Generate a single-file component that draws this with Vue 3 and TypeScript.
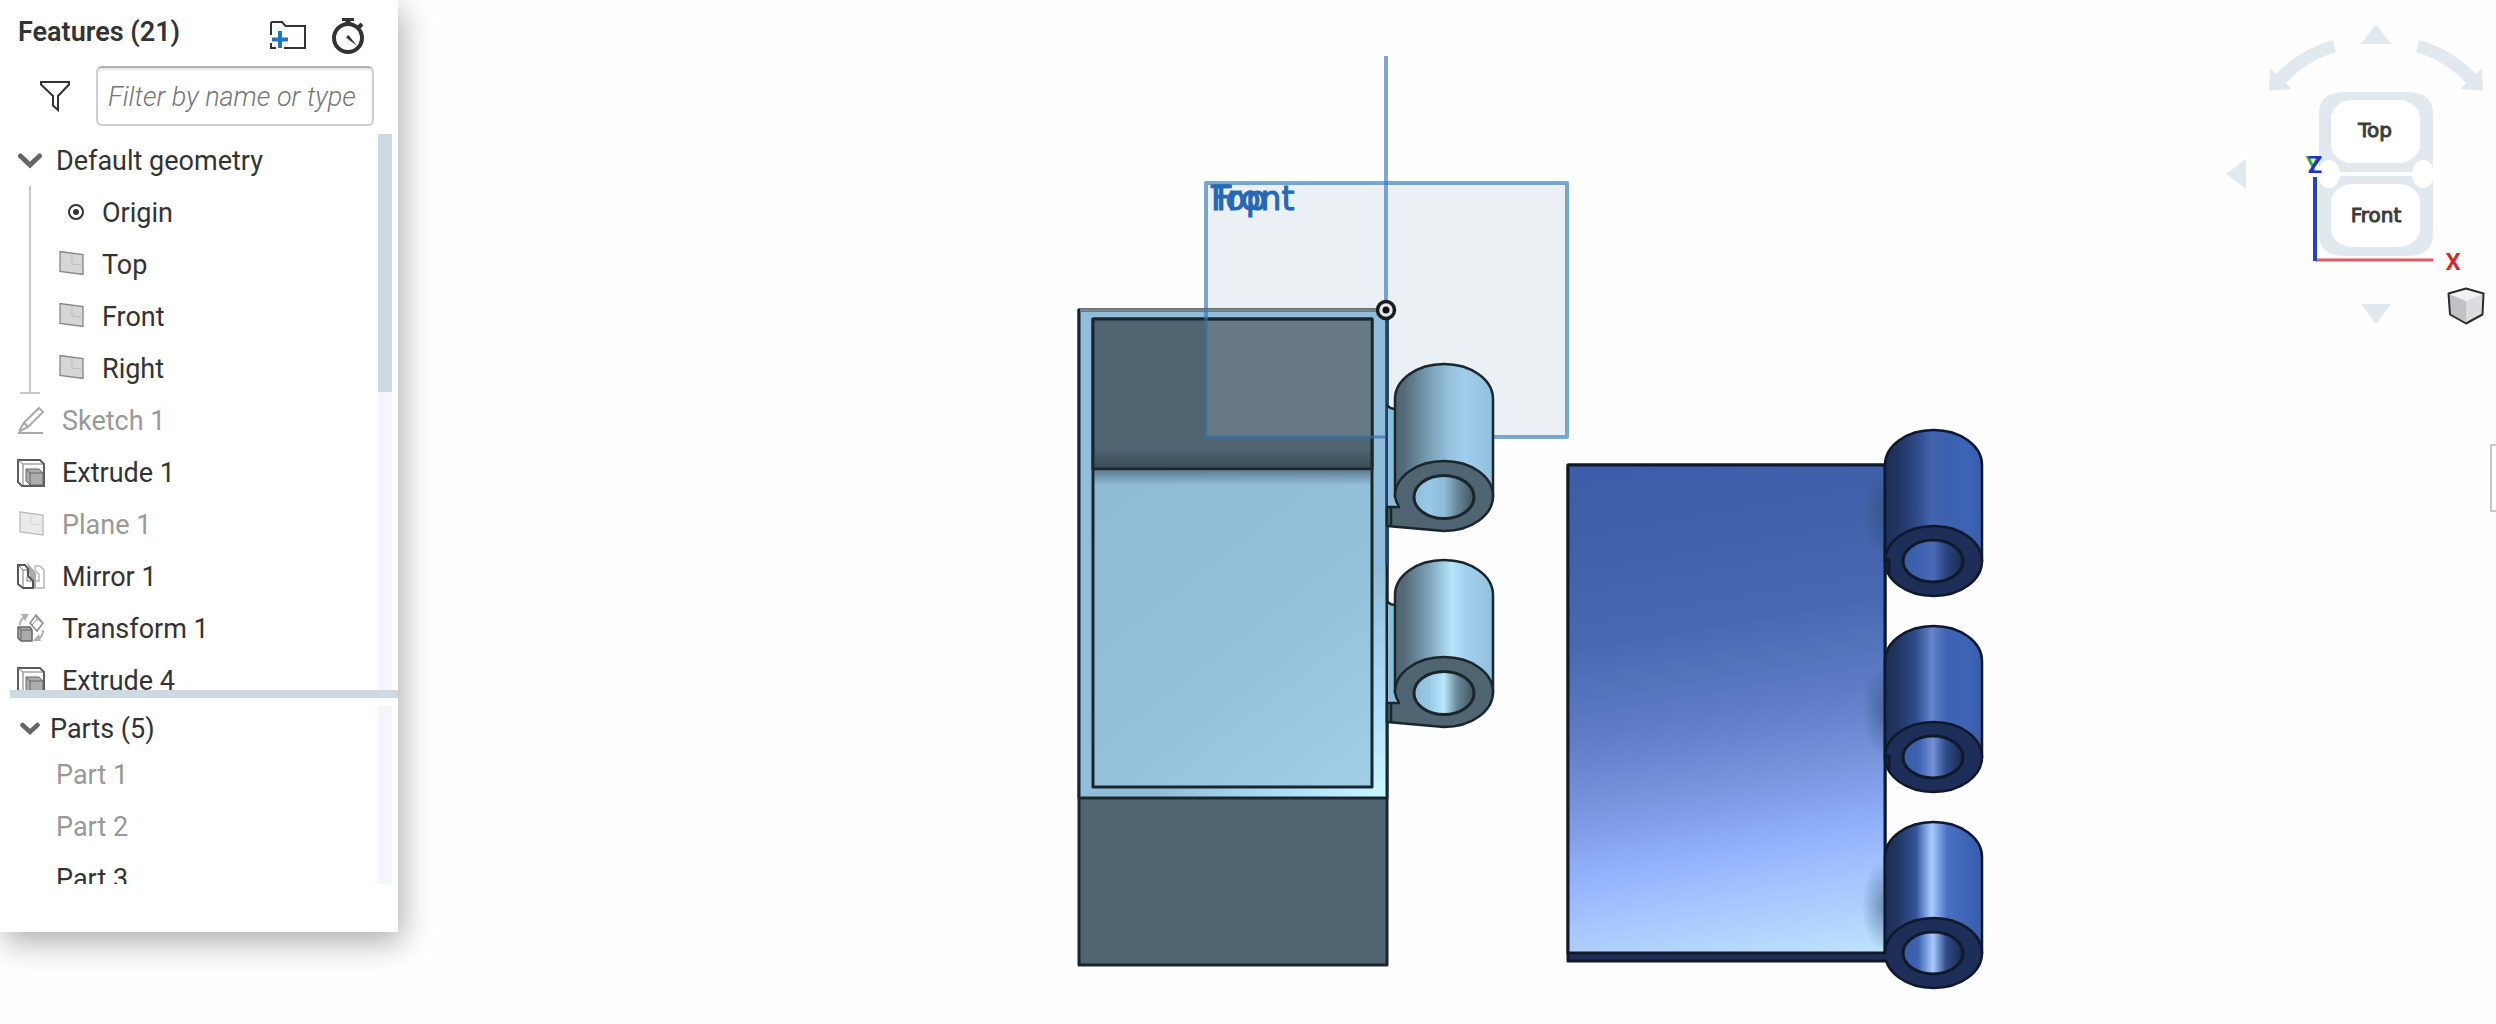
<script setup lang="ts">
import { ref } from 'vue'

type Icon = 'origin' | 'plane' | 'sketch' | 'extrude' | 'mirror' | 'transform'
interface Item {
  name: string
  icon: Icon
  muted?: boolean
}

const filter = ref('')

const geometry: Item[] = [
  { name: 'Origin', icon: 'origin' },
  { name: 'Top', icon: 'plane' },
  { name: 'Front', icon: 'plane' },
  { name: 'Right', icon: 'plane' },
]

const features: Item[] = [
  { name: 'Sketch 1', icon: 'sketch', muted: true },
  { name: 'Extrude 1', icon: 'extrude' },
  { name: 'Plane 1', icon: 'plane', muted: true },
  { name: 'Mirror 1', icon: 'mirror' },
  { name: 'Transform 1', icon: 'transform' },
  { name: 'Extrude 4', icon: 'extrude' },
]

const parts = [
  { name: 'Part 1', muted: true },
  { name: 'Part 2', muted: true },
  { name: 'Part 3', muted: false },
]

const lightTubes = [
  { y: 0, fill: 'url(#lt0)', bore: 'url(#lb0)' },
  { y: 196, fill: 'url(#lt1)', bore: 'url(#lb1)' },
]

const blueTubes = [
  { y: 0, fill: 'url(#bt0)', bore: 'url(#bb0)' },
  { y: 196, fill: 'url(#bt1)', bore: 'url(#bb1)' },
  { y: 392, fill: 'url(#bt2)', bore: 'url(#bb2)' },
]

const tubeStops = [
  { id: 'bt0', c: ['#1c2e54', '#20345f', '#2d4886', '#4364ac', '#3c61b0', '#3d64b6', '#3a5ca6'] },
  { id: 'bt1', c: ['#1c2e54', '#20345f', '#2f4c8c', '#6485cc', '#3f63b3', '#3d64b6', '#3a5ca6'] },
  { id: 'bt2', c: ['#1c2e54', '#20345f', '#34539a', '#a9ccff', '#4a70c4', '#3d64b6', '#3a5ca6'] },
]
const tubeOffsets = [0, 0.12, 0.32, 0.48, 0.64, 0.85, 1]

const boreStops = [
  { id: 'bb0', c: ['#3a5ca6', '#3d62b0', '#4a6bb6', '#2b447d', '#1a2a4d'] },
  { id: 'bb1', c: ['#3a5ca6', '#3d62b0', '#7390d6', '#2f4a88', '#1a2a4d'] },
  { id: 'bb2', c: ['#3a5ca6', '#3d62b0', '#a9caff', '#2f4a88', '#1a2a4d'] },
  { id: 'lb0', c: ['#90bdd8', '#98c8e6', '#8fbdd8', '#688898', '#3f535e'] },
  { id: 'lb1', c: ['#90bdd8', '#98c8e6', '#b9e8fc', '#688898', '#3f535e'] },
]
const boreOffsets = [0, 0.25, 0.5, 0.72, 1]
</script>

<template>
  <div class="app">
    <aside class="panel">
      <header class="head">
        <h1>Features (21)</h1>
        <button class="tool folder" aria-label="New folder">
          <svg width="36" height="30" viewBox="0 0 36 30" fill="none">
            <path d="M1 14V2.500q0-1.500 1.500-1.500H12l3.500 4H35v22H14M6 27H1v-5" stroke="#333" stroke-width="2" />
            <path d="M10 10v17M2 18.500h16" stroke="#2277bb" stroke-width="4" />
          </svg>
        </button>
        <button class="tool" aria-label="Rebuild times">
          <svg width="34" height="38" viewBox="0 0 34 38" fill="none" stroke="#333">
            <circle cx="17" cy="21" r="14" stroke-width="4" />
            <path d="M11 2.500h12" stroke-width="3" />
            <path d="M17 2v6" stroke-width="5" />
            <path d="M27 11l4-4" stroke-width="4" />
            <path d="M15 20.500l2.500-2.500 8.500 11z" fill="#333" stroke="none" />
          </svg>
        </button>
      </header>

      <div class="search">
        <button class="tool" aria-label="Filter">
          <svg width="30" height="32" viewBox="0 0 30 32" fill="none" stroke="#333" stroke-width="2">
            <path d="M1 2h28v2.500L18 16v14l-5-4.500V16L1 4.500z" />
          </svg>
        </button>
        <input v-model="filter" type="text" placeholder="Filter by name or type" aria-label="Filter by name or type" />
      </div>

      <div class="scroll features">
        <div class="content">
          <button class="row toggle">
            <svg class="chev" width="24" height="16" viewBox="0 0 24 16" fill="none">
              <path d="M2.500 3l9.500 9 9.500-9" stroke="#666" stroke-width="5" stroke-linecap="round" />
            </svg>
            <span>Default geometry</span>
          </button>
          <div class="group">
            <div class="guide"></div>
            <ul>
              <li v-for="g in geometry" :key="g.name" class="row">
                <svg v-if="g.icon === 'origin'" width="28" height="28" viewBox="0 0 28 28">
                  <circle cx="18" cy="13" r="7" fill="none" stroke="#333" stroke-width="2" />
                  <circle cx="18" cy="13" r="3" fill="#333" />
                </svg>
                <svg v-else width="28" height="28" viewBox="0 0 28 28">
                  <path d="M2 0.500l23 3v20L2 20.500z" fill="#d6d6d6" stroke="#858585" stroke-width="1.300" />
                  <path d="M14 3v10l11 1" fill="none" stroke="#bcbcbc" />
                </svg>
                <span>{{ g.name }}</span>
              </li>
            </ul>
          </div>
          <ul>
            <li v-for="f in features" :key="f.name" class="row feature" :class="{ muted: f.muted }">
              <svg v-if="f.icon === 'sketch'" width="30" height="30" viewBox="0 0 30 30" fill="none" stroke="#aaa" stroke-width="2">
                <path d="M2 27h25" />
                <path d="M3 25.500l5-9L23 2l4 4-15 15-9 4.500M8 16.500l4 4.500" />
              </svg>
              <svg v-else-if="f.icon === 'extrude'" width="30" height="30" viewBox="0 0 30 30">
                <path d="M2 2h22l4 4v22H6l-4-4z" fill="#fff" stroke="#5c5c5c" stroke-width="2" />
                <path d="M2 2l5 4h20M7 6v21" fill="none" stroke="#777" />
                <path d="M10 11h13l4 4v12H14l-4-4z" fill="#adadad" stroke="#666" />
                <path d="M10 11l4 4h13M14 15v12" fill="none" stroke="#666" />
              </svg>
              <svg v-else-if="f.icon === 'plane'" width="30" height="30" viewBox="0 0 30 30">
                <path d="M4 2l23 3v20L4 22z" fill="#eaeaea" stroke="#bcbcbc" stroke-width="1.300" />
                <path d="M15 4v10l12 1" fill="none" stroke="#d8d8d8" />
              </svg>
              <svg v-else-if="f.icon === 'mirror'" width="30" height="30" viewBox="0 0 30 30">
                <path d="M19 4h5l4 4v18H19v-7h4v-7l-4-4z" fill="#fff" stroke="#b8b8b8" stroke-width="1.500" />
                <path d="M11 0l9 11v15h-4z" fill="#aaa" />
                <path d="M2 3h7l3 4v7l5 5v7H7l-5-4z" fill="#fff" stroke="#555" stroke-width="2" />
                <path d="M2 3l5 5v17M7 8h4M11 15v4h5" fill="none" stroke="#777" />
              </svg>
              <svg v-else width="30" height="30" viewBox="0 0 30 30">
                <path d="M4 11q0-6 5-8" fill="none" stroke="#b0b0b0" stroke-width="2" />
                <path d="M5 0h8L9 7zM17 27h8l-2-7z" fill="#b0b0b0" />
                <path d="M27 16q0 7-5 9" fill="none" stroke="#b0b0b0" stroke-width="2" />
                <path d="M20 1l7 8-6 8-7-8z" fill="#fff" stroke="#888" stroke-width="1.500" />
                <path d="M20 1l1 4 6 4M21 5l-5 6" fill="none" stroke="#999" />
                <path d="M2 13h12l2 3v11H5l-3-3z" fill="#aaa" stroke="#666" stroke-width="1.500" />
                <path d="M2 13l3 3h11M5 16v11" fill="none" stroke="#666" />
              </svg>
              <span>{{ f.name }}</span>
            </li>
          </ul>
        </div>
        <div class="track"><div class="thumb"></div></div>
      </div>

      <div class="divider"></div>

      <div class="scroll parts">
        <div class="content">
          <button class="row toggle parts-head">
            <svg class="chev" width="20" height="14" viewBox="0 0 20 14" fill="none">
              <path d="M2.500 3l7.500 7 7.500-7" stroke="#666" stroke-width="4.500" stroke-linecap="round" />
            </svg>
            <span>Parts (5)</span>
          </button>
          <ul>
            <li v-for="p in parts" :key="p.name" class="row part" :class="{ muted: p.muted }">{{ p.name }}</li>
          </ul>
        </div>
        <div class="track"></div>
      </div>
    </aside>

    <main class="canvas">
      <svg class="scene" viewBox="398 0 2098 1024" role="img" aria-label="Part studio model">
        <defs>
          <linearGradient v-for="t in tubeStops" :id="t.id" :key="t.id">
            <stop v-for="(c, i) in t.c" :key="i" :offset="tubeOffsets[i]" :stop-color="c" />
          </linearGradient>
          <linearGradient v-for="b in boreStops" :id="b.id" :key="b.id">
            <stop v-for="(c, i) in b.c" :key="i" :offset="boreOffsets[i]" :stop-color="c" />
          </linearGradient>
          <linearGradient id="lt0">
            <stop offset="0" stop-color="#4f6571" />
            <stop offset="0.1" stop-color="#546c79" />
            <stop offset="0.35" stop-color="#7a9fb5" />
            <stop offset="0.55" stop-color="#94c1dc" />
            <stop offset="0.7" stop-color="#9fceec" />
            <stop offset="1" stop-color="#93c0dc" />
          </linearGradient>
          <linearGradient id="lt1">
            <stop offset="0" stop-color="#4f6571" />
            <stop offset="0.1" stop-color="#546c79" />
            <stop offset="0.35" stop-color="#7ea4ba" />
            <stop offset="0.58" stop-color="#b6e6fb" />
            <stop offset="0.72" stop-color="#a1d0ee" />
            <stop offset="1" stop-color="#93c0dc" />
          </linearGradient>
          <linearGradient id="plate" gradientUnits="userSpaceOnUse" x1="1568" y1="465" x2="1659" y2="992">
            <stop offset="0" stop-color="#3b5ca6" />
            <stop offset="0.34" stop-color="#4869b1" />
            <stop offset="0.5" stop-color="#5d7cc5" />
            <stop offset="0.64" stop-color="#7895de" />
            <stop offset="0.76" stop-color="#92b1fc" />
            <stop offset="0.86" stop-color="#a6c7fe" />
            <stop offset="1" stop-color="#bfe3fd" />
          </linearGradient>
          <linearGradient id="floor" gradientUnits="userSpaceOnUse" x1="1150" y1="480" x2="1400" y2="800">
            <stop offset="0" stop-color="#8fbbd5" />
            <stop offset="0.5" stop-color="#95c1db" />
            <stop offset="1" stop-color="#a3cfe9" />
          </linearGradient>
          <radialGradient id="rim" gradientUnits="userSpaceOnUse" cx="1387" cy="798" r="230">
            <stop offset="0" stop-color="#caf8ff" />
            <stop offset="0.35" stop-color="#b4e2fc" />
            <stop offset="1" stop-color="#91bdd8" />
          </radialGradient>
          <linearGradient id="shadeUp" x1="0" y1="0" x2="0" y2="1">
            <stop offset="0" stop-color="#20303a" stop-opacity="0" />
            <stop offset="1" stop-color="#20303a" stop-opacity="0.45" />
          </linearGradient>
          <linearGradient id="shadeDown" x1="0" y1="0" x2="0" y2="1">
            <stop offset="0" stop-color="#40586a" stop-opacity="0.6" />
            <stop offset="1" stop-color="#40586a" stop-opacity="0" />
          </linearGradient>
          <radialGradient id="shadeSide">
            <stop offset="0" stop-color="#30486a" stop-opacity="0.5" />
            <stop offset="0.5" stop-color="#30486a" stop-opacity="0.25" />
            <stop offset="1" stop-color="#30486a" stop-opacity="0" />
          </radialGradient>
        </defs>

        <!-- reference planes -->
        <rect x="1206" y="183" width="361" height="254" fill="#ebf0f5" />

        <!-- open box -->
        <g stroke="#1b262c" stroke-width="3" stroke-linejoin="round">
          <rect x="1079" y="310" width="308" height="655" fill="#4f6571" />
          <rect x="1079" y="310" width="308" height="488" fill="url(#rim)" />
          <rect x="1093" y="319" width="279" height="468" fill="url(#floor)" />
          <rect x="1093" y="319" width="279" height="150" fill="#4f6571" />
        </g>
        <rect x="1094" y="448" width="277" height="20" fill="url(#shadeUp)" />
        <rect x="1094" y="471" width="277" height="14" fill="url(#shadeDown)" />
        <rect x="1207" y="321" width="164" height="115" fill="#ebf0f5" fill-opacity="0.16" />
        <path d="M1080 310h306" stroke="#7d8488" stroke-width="3" />

        <!-- plane outlines and labels -->
        <path d="M1206 319V183H1567V437H1387" fill="none" stroke="#3678ba" stroke-opacity="0.65" stroke-width="4" stroke-linejoin="round" />
        <path d="M1206 319V437H1387" fill="none" stroke="#3272b0" stroke-opacity="0.7" stroke-width="3" />
        <path d="M1386 56V310" stroke="#3678ba" stroke-opacity="0.65" stroke-width="4" />
        <path d="M1387 310V565" stroke="#1d4070" stroke-width="3" />
        <g class="plane-label">
          <text x="1211" y="210">Top</text>
          <text x="1211" y="210">Front</text>
        </g>

        <!-- light hinge knuckles -->
        <g v-for="t in lightTubes" :key="t.y" :transform="`translate(0 ${t.y})`" stroke="#1b262c" stroke-width="2.500" stroke-linejoin="round">
          <path d="M1388 406q3 3 8 3v98h-8z" fill="#91bdd8" stroke="none" />
          <path d="M1387 405q3 4 9 4" fill="none" />
          <path d="M1395 497V399a49 35 0 0 1 98 0v98z" :fill="t.fill" />
          <path d="M1387 507h12a49 35 0 0 1 -4 -11a49 35 0 0 1 98 0a49 35 0 0 1 -49 35l-57-5z" fill="#4f6571" />
          <path d="M1391 508v18" />
          <ellipse cx="1444" cy="497" rx="30" ry="21.500" :fill="t.bore" stroke-width="3" />
        </g>

        <!-- origin marker -->
        <circle cx="1386" cy="310" r="8.500" fill="#e6e6e6" stroke="#1c1c1c" stroke-width="3.500" />
        <circle cx="1386" cy="310" r="3.500" fill="#111" />

        <!-- blue hinge leaf -->
        <g stroke="#10192c" stroke-width="3" stroke-linejoin="round">
          <rect x="1568" y="465" width="317" height="496" fill="#1d2f58" />
          <rect x="1568" y="465" width="317" height="488" fill="url(#plate)" />
        </g>
        <g v-for="t in blueTubes" :key="t.y" :transform="`translate(0 ${t.y})`" stroke="#10192c" stroke-width="2.500">
          <ellipse cx="1884" cy="514" rx="22" ry="46" fill="url(#shadeSide)" stroke="none" />
          <path d="M1885 561V465a48.500 35 0 0 1 97 0v96z" :fill="t.fill" />
          <ellipse cx="1933.500" cy="561" rx="48.500" ry="35" fill="#1d2f58" />
          <path v-if="t.y < 392" d="M1885 560h4v13" fill="none" stroke-width="3" />
          <ellipse cx="1933" cy="561" rx="30" ry="21" :fill="t.bore" stroke-width="3" />
        </g>
        <path d="M1878 954.500h14v5h-14z" fill="#1d2f58" />
      </svg>

      <div class="view">
        <svg width="276" height="340" viewBox="2220 0 276 340" role="img" aria-label="View cube">
          <g fill="#e1e8ee">
            <path d="M2376 24l15 20h-30zM2226 174l20-15v30zM2361 304h30l-15 20z" />
            <path d="M2333 40l3 12q-31 10-50 31l5 6-22 2 1-23 6 6q24-25 57-34z" />
            <path d="M2419 40l-3 12q31 10 50 31l-5 6 22 2-1-23-6 6q-24-25-57-34z" />
            <path d="M2319 172v-58q0-22 26-22h62q26 0 26 22v58zM2319 176h114v58q0 22-26 22h-62q-26 0-26-22z" />
          </g>
          <g fill="#fff">
            <rect x="2331" y="100" width="89" height="63" rx="22" ry="18" />
            <rect x="2331" y="184" width="89" height="63" rx="22" ry="18" />
            <ellipse cx="2329" cy="174" rx="11" ry="14" />
            <ellipse cx="2423" cy="174" rx="11" ry="14" />
          </g>
          <path d="M2315 260h118" stroke="#dd5a62" stroke-width="3" />
          <path d="M2315 177v84" stroke="#2343c4" stroke-width="4" />
          <g class="face">
            <text x="2375" y="137">Top</text>
            <text x="2376" y="222">Front</text>
          </g>
          <g class="axis">
            <text x="2313" y="173" fill="#2faa3c">Y</text>
            <text x="2315" y="173" fill="#2030c8">Z</text>
            <text x="2453" y="270" fill="#d8262e">X</text>
          </g>
        </svg>
        <button class="cube" aria-label="View options">
          <svg width="38" height="38" viewBox="0 0 38 38" stroke-linejoin="round">
            <path d="M19 2l17 5-17 7L2 7z" fill="#f0f1f1" />
            <path d="M2 7l17 7v22L3 27z" fill="#bfc1c4" />
            <path d="M36 7l-17 7v22l16-9z" fill="#dadcde" />
            <path d="M19 1.500l17.500 5L35.500 27.500 19 36.500 3 27.500 1.500 6.500z" fill="none" stroke="#2b2b2b" stroke-width="2" />
          </svg>
        </button>
      </div>

      <button class="tab" aria-label="Open side panel"></button>
    </main>
  </div>
</template>

<style>
body {
  margin: 0;
  background: #fefefe;
}
</style>

<style scoped>
.app {
  position: relative;
  display: flex;
  min-height: 100vh;
  overflow: hidden;
  font-family: Roboto, "Liberation Sans", sans-serif;
  font-size: 27px;
  color: #333;
}
button {
  padding: 0;
  border: 0;
  background: none;
  font: inherit;
  color: inherit;
  text-align: left;
}
svg {
  display: block;
  flex: none;
}
ul {
  margin: 0;
  padding: 0;
  list-style: none;
}
.panel {
  position: relative;
  z-index: 1;
  flex: none;
  align-self: flex-start;
  box-sizing: border-box;
  width: 398px;
  padding-bottom: 48px;
  background: #fff;
  box-shadow: 4px 10px 30px rgba(0, 0, 0, 0.32);
}
.head {
  display: flex;
  align-items: center;
  box-sizing: border-box;
  height: 66px;
  padding: 6px 33px 0 18px;
}
h1 {
  flex: 1;
  margin: 0;
  padding-bottom: 8px;
  font-size: 27px;
  line-height: 30px;
  font-weight: 600;
}
.folder {
  margin-right: 25px;
}
.search {
  display: flex;
  align-items: center;
  gap: 26px;
  padding: 0 24px 8px 40px;
}
input {
  flex: 1;
  min-width: 0;
  box-sizing: border-box;
  height: 60px;
  padding: 2px 10px 0;
  border: 2px solid #cfcfcf;
  border-top-color: #b0b0b0;
  border-radius: 6px;
  background: #fff;
  box-shadow: inset 0 2px 2px rgba(0, 0, 0, 0.1);
  font: italic 300 27px Roboto, "Liberation Sans", sans-serif;
  color: #333;
}
input::placeholder {
  color: #757575;
  opacity: 1;
}
.scroll {
  display: flex;
  padding-right: 6px;
}
.features {
  height: 556px;
}
.parts {
  height: 178px;
  margin-top: 8px;
}
.content {
  flex: 1;
  overflow: hidden;
}
.track {
  flex: none;
  width: 14px;
  background: #f3f7fb;
}
.thumb {
  height: 258px;
  background: #cdd9e3;
}
.row {
  display: flex;
  align-items: center;
  box-sizing: border-box;
  height: 52px;
  padding-top: 2px;
  white-space: nowrap;
}
.toggle {
  width: 100%;
  gap: 14px;
  padding-left: 18px;
}
.group {
  display: flex;
}
.guide {
  width: 20px;
  margin: 0 18px 0 20px;
  border-bottom: 2px solid #c8c8c8;
  background: linear-gradient(#c8c8c8, #c8c8c8) center / 2px 100% no-repeat;
}
.group .row {
  gap: 16px;
}
.feature {
  gap: 16px;
  padding-left: 16px;
}
.muted {
  color: #999;
}
.divider {
  height: 8px;
  margin-left: 10px;
  background: #cdd9e3;
}
.parts-head {
  height: 42px;
  gap: 10px;
  padding-top: 4px;
  padding-left: 20px;
}
.part {
  padding-left: 56px;
}
.canvas {
  flex: 1;
  min-width: 0;
}
.scene {
  width: 100%;
  height: 100vh;
}
.plane-label {
  font: 33px "DejaVu Sans", sans-serif;
  fill: #2867b2;
  stroke: #2867b2;
  stroke-width: 1px;
}
.face {
  font: 20px "DejaVu Sans", sans-serif;
  fill: #3c3c3c;
  stroke: #3c3c3c;
  stroke-width: 1px;
  text-anchor: middle;
}
.axis {
  font: 600 24px Roboto, sans-serif;
  text-anchor: middle;
}
.view {
  position: absolute;
  top: 0;
  right: 0;
}
.cube {
  position: absolute;
  right: 11px;
  bottom: 15px;
}
.tab {
  position: absolute;
  top: 444px;
  right: 0;
  width: 6px;
  height: 68px;
  border: 2px solid #c8c8c8;
  border-right: 0;
  background: #fff;
}
</style>
